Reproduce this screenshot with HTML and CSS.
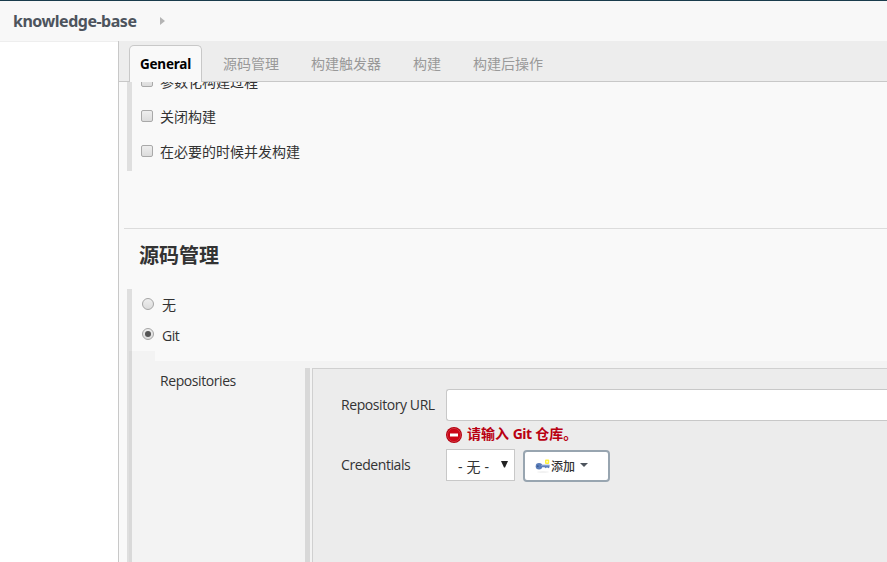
FILE: index.html
```
<!DOCTYPE html>
<html lang="zh-CN">
<head>
<meta charset="utf-8">
<title>knowledge-base Config</title>
<link rel="stylesheet" href="styles.css">
</head>
<body>
<header class="crumbs">
  <span class="job">knowledge-base</span>
  <svg class="arrow" width="5" height="8" viewBox="0 0 5 8"><path d="M0 0L5 4L0 8Z" fill="#b4b4b4"/></svg>
</header>
<div class="page">
  <aside class="side"></aside>
  <main class="main">
    <nav class="tabs">
      <span class="tab active">General</span>
      <span class="tab t2">源码管理</span>
      <span class="tab t3">构建触发器</span>
      <span class="tab t4">构建</span>
      <span class="tab t5">构建后操作</span>
    </nav>
    <div class="content">
      <section class="group options">
        <div class="option"><i class="check"></i><span>参数化构建过程</span></div>
        <div class="option"><i class="check"></i><span>关闭构建</span></div>
        <div class="option"><i class="check"></i><span>在必要的时候并发构建</span></div>
      </section>
      <h2 class="heading">源码管理</h2>
      <section class="group scm">
        <div class="choice"><i class="radio"></i><span>无</span></div>
        <div class="choice"><i class="radio on"></i><span class="latin">Git</span></div>
        <div class="panel">
          <div class="indent"></div>
          <div class="body">
            <div class="label"><span class="latin">Repositories</span></div>
            <div class="bar"></div>
            <div class="repo">
              <div class="latin field-label">Repository URL</div>
              <div class="input"></div>
              <div></div>
              <div class="error">
                <svg width="16" height="16" viewBox="0 0 16 16"><circle cx="8" cy="8" r="8" fill="#b5000f"/><circle cx="8" cy="8" r="6.6" fill="#cc0415" stroke="#d8505a" stroke-width=".6"/><rect x="4" y="6.5" width="8" height="3" fill="#fff"/></svg>
                <span>请输入 <span class="git">Git</span> 仓库。</span>
              </div>
              <div class="latin field-label">Credentials</div>
              <div class="controls">
                <div class="select"><span>- 无 -</span><svg width="7" height="7" viewBox="0 0 7 7"><path d="M0 0H7L4 6.5H3Z" fill="#222"/></svg></div>
                <div class="button">
                  <svg width="16" height="16" viewBox="0 0 16 16"><ellipse cx="8" cy="14" rx="6" ry=".8" fill="#eee"/><circle cx="4" cy="8.3" r="3.3" fill="#5a7db9"/><path d="M6 6.8H14.5V9.3L13.4 10.3L12 9.3L10.8 10.3L9.5 9.3H6Z" fill="#5a7db9"/><path d="M6 7.6H14" stroke="#87a3d0"/><circle cx="2.8" cy="8.2" r=".9" fill="#3c5b91"/><rect x="10" y="1.5" width="4.2" height="4.5" rx="1" fill="#fff23a"/><circle cx="12.1" cy="3.7" r="1" fill="#fffcc0"/></svg>
                  <span>添加</span>
                  <svg class="caret" width="8" height="4" viewBox="0 0 8 4"><path d="M0 0H8L4 4Z" fill="#4d545d"/></svg>
                </div>
              </div>
            </div>
          </div>
        </div>
      </section>
    </div>
  </main>
</div>
</body>
</html>
```
FILE: styles.css
```
* { box-sizing: border-box; }
body {
  margin: 0;
  width: 887px;
  height: 562px;
  overflow: hidden;
  background: #fff;
  color: #333;
  font: 14px/20px "Noto Sans", "Noto Sans CJK SC", sans-serif;
  display: flex;
  flex-direction: column;
  white-space: nowrap;
}
svg { display: block; flex: none; }
.crumbs {
  height: 41px;
  flex: none;
  border-top: 1px solid #1a3c4c;
  background: #f8f8f8;
  display: flex;
  align-items: center;
  padding-left: 13px;
}
.job { width: 147px; font-size: 16px; letter-spacing: -.48px; font-weight: 700; color: #4d545d; }
.page { flex: 1; min-height: 0; display: flex; }
.side { width: 118px; flex: none; border-top: 1px solid #eee; }
.main {
  flex: 1;
  min-width: 0;
  border-left: 1px solid #c8c8c8;
  background: #f9f9f9;
  display: flex;
  flex-direction: column;
}
.tabs {
  height: 41px;
  flex: none;
  background: #ededed;
  border-bottom: 1px solid #c8c8c8;
  display: flex;
  padding: 4px 0 0 10px;
}
.tab { line-height: 37px; color: #999; height: 37px; }
.active {
  width: 73px;
  border: 1px solid #c8c8c8;
  border-bottom: 0;
  border-radius: 5px 5px 0 0;
  background: #f9f9f9;
  color: #000;
  font-size: 13.5px;
  letter-spacing: -.2px;
  font-weight: 700;
  text-align: center;
  line-height: 36px;
}
.t2 { margin-left: 21px; }
.t3 { margin-left: 32px; }
.t4 { margin-left: 32px; }
.t5 { margin-left: 32px; }
.content { flex: 1; min-height: 0; overflow: hidden; display: flex; flex-direction: column; }
.group { margin-left: 8px; border-left: 5px solid #dfdfdf; flex: none; }
.options { margin-top: -19px; height: 108px; }
.option { height: 35px; display: flex; align-items: center; padding-left: 9px; gap: 7px; }
.option span { padding-top: 3px; }
.check {
  width: 12px;
  height: 12px;
  border: 1px solid #a9a9a9;
  border-radius: 2px;
  background: linear-gradient(#eee, #dcdcdc);
}
.heading {
  margin: 57px 0 0 5px;
  border-top: 1px solid #dcdcdc;
  padding-left: 15px;
  height: 61px;
  flex: none;
  font-size: 20px;
  line-height: 53px;
}
.scm { height: 273px; padding-bottom: 2px; }
.choice { height: 31px; display: flex; align-items: center; padding: 0 0 3px 10px; gap: 8px; }
.choice:first-child { padding-bottom: 2px; }
.choice span { padding-top: 4px; }
.choice:first-child span { padding-top: 3px; }
.radio {
  width: 12px;
  height: 12px;
  border: 1px solid #a5a5a5;
  border-radius: 50%;
  background: linear-gradient(#eee, #dcdcdc);
  display: grid;
  place-items: center;
}
.on::before { content: ""; width: 6px; height: 6px; border-radius: 50%; background: #555; }
.latin { font-family: "Open Sans", "Noto Sans", sans-serif; font-size: 14px; letter-spacing: -.42px; }
.panel { margin-left: -3px; height: 211px; display: flex; }
.indent { width: 26px; background: rgba(0, 0, 0, .025); }
.body { flex: 1; margin-top: 10px; background: rgba(0, 0, 0, .025); display: flex; }
.label { width: 150px; padding: 10px 0 0 5px; }
.bar { width: 5px; margin-top: 7px; background: #d8d8d8; }
.repo {
  flex: 1;
  margin: 7px 0 0 2px;
  border: 1px solid #d0d0d0;
  border-width: 1px 0 0 1px;
  background: #ececec;
  padding: 20px 0 0 28px;
  display: grid;
  grid-template-columns: 105px 1fr;
  grid-template-rows: 32px 28px 33px;
}
.field-label { line-height: 31px; }
.input {
  height: 32px;
  background: #fff;
  border: 1px solid #c8c8c8;
  border-right: 0;
  border-radius: 3px 0 0 3px;
}
.error {
  display: flex;
  align-items: center;
  gap: 5px;
  color: #b90012;
  font-weight: 700;
}
.error > span { padding-bottom: 2px; }
.git { letter-spacing: -.5px; }
.controls { display: flex; gap: 8px; }
.select {
  width: 69px;
  height: 32px;
  background: #fff;
  border: 1px solid #c8c8c8;
  display: flex;
  align-items: center;
  justify-content: space-between;
  padding: 0 6px 0 11px;
}
.select span { padding-top: 4px; letter-spacing: .2px; }
.select svg { margin-bottom: 2px; }
.button {
  width: 87px;
  height: 32px;
  margin-top: 1px;
  background: #fff;
  border: 2px solid #98a5b0;
  border-radius: 4px;
  display: flex;
  align-items: center;
  padding-left: 10px;
  font-size: 12px;
  font-weight: 500;
}
.button span { padding-top: 2px; }
.caret { margin: 0 0 3px 5px; }
```
